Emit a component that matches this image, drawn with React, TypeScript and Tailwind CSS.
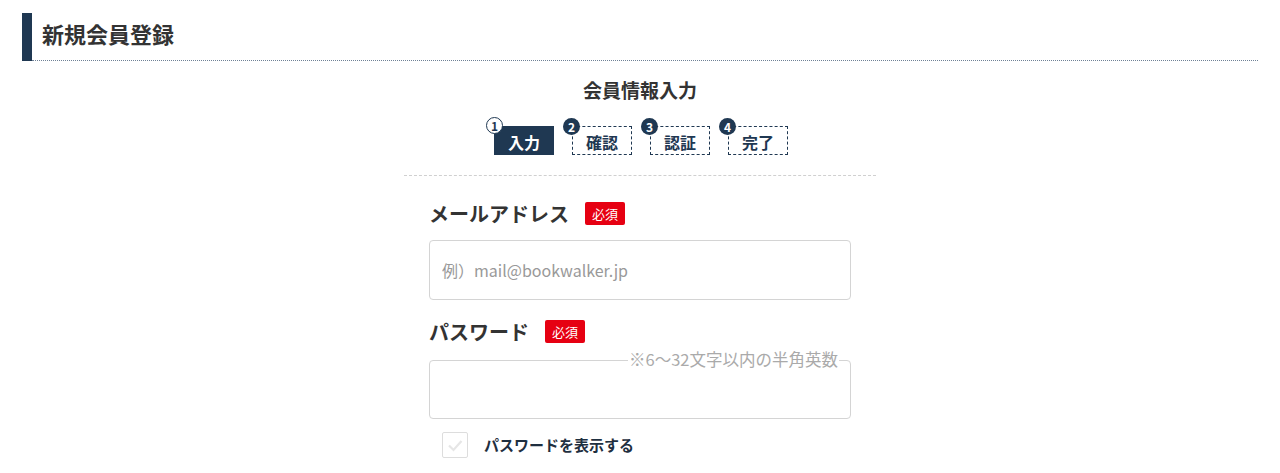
import { useState } from "react";

const steps = [
  { no: 1, label: "入力", active: true },
  { no: 2, label: "確認", active: false },
  { no: 3, label: "認証", active: false },
  { no: 4, label: "完了", active: false },
];

function Badge() {
  return (
    <span className="ml-[16px] inline-flex h-[23px] w-[40px] items-center justify-center rounded-[2px] bg-[#e60012] text-[13px] leading-none text-white">
      必須
    </span>
  );
}

export default function App() {
  const [showPw, setShowPw] = useState(false);

  return (
    <div className="min-h-[473px] bg-white text-[#333] [font-family:'Noto_Sans_CJK_JP','Noto_Sans',sans-serif]">
      {/* page title */}
      <div className="mx-[22px] flex pt-[13px]">
        <div className="w-[10px] shrink-0 bg-[#1f3852]" />
        <h1 className="flex h-[48px] flex-1 items-center border-b border-dotted border-[#6f8196] pb-[7px] pl-[10px] text-[22px] font-bold leading-none text-[#333]">
          新規会員登録
        </h1>
      </div>

      <div className="mx-auto w-[472px]">
        <h2 className="mt-[17px] text-center text-[19px] font-bold leading-[24px] text-[#333]">会員情報入力</h2>

        {/* steps */}
        <div className="mt-[24px] flex justify-center gap-[18px] pl-[2px]">
          {steps.map((s) => (
            <div key={s.no} className="relative">
              <div
                className={
                  s.active
                    ? "flex h-[29px] w-[60px] items-center justify-center bg-[#1f3852] text-[16px] font-bold text-white"
                    : "flex h-[29px] w-[60px] items-center justify-center border border-dashed border-[#1f3852] text-[16px] font-bold text-[#1f3852]"
                }
              >
                <span className="mt-[2px]">{s.label}</span>
              </div>
              <span
                className={
                  s.active
                    ? "absolute -left-[8px] -top-[9px] flex h-[17px] w-[17px] items-center justify-center rounded-full border border-[#1f3852] bg-white text-[12px] font-bold leading-none text-[#1f3852]"
                    : "absolute -left-[9px] -top-[8px] flex h-[17px] w-[17px] items-center justify-center rounded-full bg-[#1f3852] text-[12px] font-bold leading-none text-white"
                }
              >
                {s.no}
              </span>
            </div>
          ))}
        </div>

        <div className="mt-[20px] border-b border-dashed border-[#d0d0d0]" />

        {/* form */}
        <div className="px-[25px]">
          <div className="mt-[26px] flex items-center">
            <span className="text-[20px] font-bold leading-[23px] text-[#333]">メールアドレス</span>
            <Badge />
          </div>
          <input
            type="email"
            placeholder="例）mail@bookwalker.jp"
            className="mt-[15px] block h-[60px] w-full rounded-[4px] border border-[#d4d4d4] px-[12px] text-[16px] outline-none placeholder:text-[#999]"
          />

          <div className="mt-[20px] flex items-center">
            <span className="text-[20px] font-bold leading-[23px] text-[#333]">パスワード</span>
            <Badge />
          </div>
          <div className="relative mt-[17px]">
            <input
              type={showPw ? "text" : "password"}
              className="block h-[59px] w-full rounded-[4px] border border-[#d4d4d4] px-[12px] text-[16px] outline-none"
            />
            <span className="absolute -top-[12px] right-[12px] bg-white px-[1px] text-[16.5px] leading-[22px] text-[#aaa]">
              ※6〜32文字以内の半角英数
            </span>
          </div>

          <label className="mt-[13px] ml-[13px] flex cursor-pointer items-center">
            <input type="checkbox" className="sr-only" checked={showPw} onChange={() => setShowPw(!showPw)} />
            <span className="flex h-[26px] w-[26px] items-center justify-center rounded-[2px] border border-[#ddd] bg-white">
              <svg width="18" height="18" viewBox="0 0 18 18" fill="none">
                <path d="M3 9.5 L7.5 14 L15.5 5" stroke={showPw ? "#1f3852" : "#e6e6e6"} strokeWidth="2.2" />
              </svg>
            </span>
            <span className="ml-[16px] text-[15px] font-bold text-[#1f2f40]">パスワードを表示する</span>
          </label>
        </div>
      </div>
    </div>
  );
}
